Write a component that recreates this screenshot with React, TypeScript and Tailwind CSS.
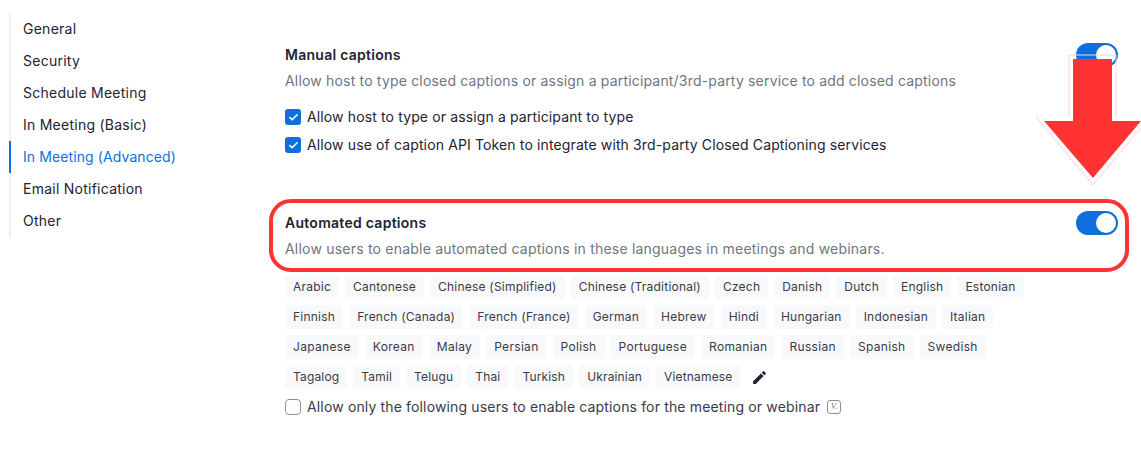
import { Check } from 'lucide-react';
import { MdEdit } from 'react-icons/md';

const NAV = [
  'General',
  'Security',
  'Schedule Meeting',
  'In Meeting (Basic)',
  'In Meeting (Advanced)',
  'Email Notification',
  'Other',
];

const LANGUAGES = [
  {
    tracking: 'tracking-[0.22px]',
    names: ['Arabic', 'Cantonese', 'Chinese (Simplified)', 'Chinese (Traditional)', 'Czech', 'Danish', 'Dutch', 'English', 'Estonian'],
  },
  {
    tracking: 'tracking-[0.23px]',
    names: ['Finnish', 'French (Canada)', 'French (France)', 'German', 'Hebrew', 'Hindi', 'Hungarian', 'Indonesian', 'Italian'],
  },
  {
    tracking: 'tracking-[0.32px]',
    names: ['Japanese', 'Korean', 'Malay', 'Persian', 'Polish', 'Portuguese', 'Romanian', 'Russian', 'Spanish', 'Swedish'],
  },
  {
    tracking: 'tracking-[0.16px]',
    names: ['Tagalog', 'Tamil', 'Telugu', 'Thai', 'Turkish', 'Ukrainian', 'Vietnamese'],
  },
];

function Toggle() {
  return (
    <div className="flex h-6 w-[42px] shrink-0 items-center justify-end rounded-full bg-[#0e6fdc] p-0.5">
      <div className="h-5 w-5 rounded-full bg-white" />
    </div>
  );
}

function CheckRow({ label }: { label: string }) {
  return (
    <div className="flex h-7 items-center gap-[6px]">
      <div className="flex h-4 w-4 items-center justify-center rounded-[3px] bg-[#0e6fdc]">
        <Check size={11} strokeWidth={3.5} className="text-white" />
      </div>
      <span className="text-sm tracking-[0.13px] text-[#232333]">{label}</span>
    </div>
  );
}

export default function App() {
  return (
    <div className="relative flex h-[454px] w-[1141px] overflow-hidden bg-white font-['Inter',sans-serif]">
      <nav className="ml-[9px] mt-[13px] h-[225px] w-[260px] shrink-0 border-l-2 border-[#eff2f6]">
        {NAV.map((item) => {
          const active = item === 'In Meeting (Advanced)';
          return (
            <div
              key={item}
              className={
                active
                  ? '-ml-0.5 flex h-8 items-center border-l-2 border-[#0e6fdc] pl-[12px] text-sm tracking-[0.1px] text-[#0e6fdc]'
                  : '-ml-0.5 flex h-8 items-center border-l-2 border-transparent pl-[12px] text-sm tracking-[0.25px] text-[#232333]'
              }
            >
              {item}
            </div>
          );
        })}
      </nav>

      <main className="mt-[43px] w-[860px]">
        <section className="pl-4 pr-[11px]">
          <div className="flex h-6 items-center justify-between">
            <h2 className="text-sm font-semibold tracking-[0.27px] text-[#232333]">Manual captions</h2>
            <Toggle />
          </div>
          <p className="mt-[2px] h-6 text-sm leading-6 tracking-[0.18px] text-[#6e7680]">
            Allow host to type closed captions or assign a participant/3rd-party service to add closed captions
          </p>
          <div className="mt-[10px]">
            <CheckRow label="Allow host to type or assign a participant to type" />
            <CheckRow label="Allow use of caption API Token to integrate with 3rd-party Closed Captioning services" />
          </div>
        </section>

        <section className="mt-[40px] h-[73px] rounded-[22px] border-4 border-[#ff3333] pl-[12px] pr-[7px] pt-[8px]">
          <div className="flex h-6 items-center justify-between">
            <h2 className="text-sm font-semibold tracking-[0.27px] text-[#232333]">Automated captions</h2>
            <Toggle />
          </div>
          <p className="mt-[2px] h-6 text-sm leading-6 tracking-[0.21px] text-[#6e7680]">
            Allow users to enable automated captions in these languages in meetings and webinars.
          </p>
        </section>

        <div className="mt-[3px] pl-4">
          <div className="flex flex-col gap-[6px]">
            {LANGUAGES.map((row, i) => (
              <div key={i} className="flex items-center gap-[6px]">
                {row.names.map((lang) => (
                  <span key={lang} className={`flex h-6 items-center rounded-[4px] bg-[#f8f9fa] px-2 text-xs text-[#3a3a48] ${row.tracking}`}>
                    {lang}
                  </span>
                ))}
                {i === 3 ? <MdEdit size={17} className="ml-[5px] text-[#232333]" /> : null}
              </div>
            ))}
          </div>
          <div className="mt-[6px] flex h-6 items-center gap-[6px]">
            <div className="h-4 w-4 rounded-[4px] border border-[#8b8f99] bg-white" />
            <span className="text-sm tracking-[0.15px] text-[#3a3a48]">Allow only the following users to enable captions for the meeting or webinar</span>
            <span className="ml-[1px] flex h-3.5 w-3.5 items-center justify-center rounded-[3px] border border-[#8b8f99] font-['Liberation_Serif',serif] text-[9px] italic text-[#6e7680]">
              V.
            </span>
          </div>
        </div>
      </main>

      {/* annotation arrow */}
      <svg className="absolute left-[1030px] top-[45px]" width="111" height="150" viewBox="0 0 111 150">
        <path d="M39 72V10H86V72M6 72L63 140L120 72" fill="none" stroke="#ffd0d0" strokeWidth="1" />
        <path d="M43 14H82V76H111L63 133L14 76H43Z" fill="#ff3333" />
      </svg>
    </div>
  );
}
